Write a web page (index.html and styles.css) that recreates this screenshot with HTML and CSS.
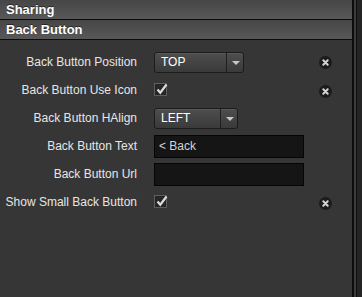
FILE: index.html
```html
<!DOCTYPE html>
<html lang="en">
<head>
    <meta charset="UTF-8">
    <title>Back Button</title>
    <link rel="stylesheet" href="styles.css">
</head>
<body>
    <div class="window">
        <div class="panel">
            <div class="section-header">Sharing</div>
            <div class="section-header">Back Button</div>

            <div class="form">
                <div class="row">
                    <label>Back Button Position</label>
                    <div class="select select-wide">
                        <span class="select-value">TOP</span>
                        <span class="select-arrow"></span>
                    </div>
                    <span class="clear"><svg viewBox="0 0 13 13"><path d="M4.3 4.3l4.4 4.4M8.7 4.3l-4.4 4.4"/></svg></span>
                </div>
                <div class="row">
                    <label>Back Button Use Icon</label>
                    <span class="check"><svg viewBox="0 0 13 13"><path d="M2.5 6.5l2.8 3.2L11.5 1.5"/></svg></span>
                    <span class="clear clear-low"><svg viewBox="0 0 13 13"><path d="M4.3 4.3l4.4 4.4M8.7 4.3l-4.4 4.4"/></svg></span>
                </div>
                <div class="row">
                    <label>Back Button HAlign</label>
                    <div class="select">
                        <span class="select-value">LEFT</span>
                        <span class="select-arrow"></span>
                    </div>
                </div>
                <div class="row">
                    <label>Back Button Text</label>
                    <input type="text" class="field" value="&lt; Back">
                </div>
                <div class="row">
                    <label>Back Button Url</label>
                    <input type="text" class="field" value="">
                </div>
                <div class="row">
                    <label>Show Small Back Button</label>
                    <span class="check"><svg viewBox="0 0 13 13"><path d="M2.5 6.5l2.8 3.2L11.5 1.5"/></svg></span>
                    <span class="clear clear-low"><svg viewBox="0 0 13 13"><path d="M4.3 4.3l4.4 4.4M8.7 4.3l-4.4 4.4"/></svg></span>
                </div>
            </div>
        </div>
        <div class="edge"></div>
    </div>
</body>
</html>
```

FILE: styles.css
```css
:root {
    --bg: #363636;
    --text: #e6e6e6;
    --line: #0c0c0c;
    --field: #151515;
}

html, body {
    height: 100%;
}

body {
    margin: 0;
    background: var(--bg);
    font-family: "Liberation Sans", Arial, sans-serif;
    color: var(--text);
    overflow: hidden;
}

.window {
    display: flex;
    height: 100%;
}

.panel {
    width: 352px;
    flex: none;
    background: var(--bg);
}

.edge {
    flex: 1;
    border-left: 2px solid var(--line);
    box-shadow: inset 2px 0 0 #3c3c3c, inset 3px 0 0 #0e0e0e;
    background: #242424;
}

.section-header {
    height: 19px;
    line-height: 19px;
    padding-left: 6px;
    border-bottom: 1px solid var(--line);
    background: linear-gradient(#464646, #585858);
    font-size: 13px;
    font-weight: 700;
    color: #fff;
    text-shadow: 0 -1px 0 rgba(0, 0, 0, 0.5);
}

.form {
    padding-top: 8px;
}

.row {
    display: grid;
    grid-template-columns: 154px 165px 13px;
    align-items: center;
    height: 28px;
}

.row label {
    padding-right: 17px;
    text-align: right;
    font-size: 12px;
    white-space: nowrap;
}

.select {
    display: flex;
    width: 82px;
    height: 19px;
    border: 1px solid #1c1c1c;
    border-radius: 3px;
    background: linear-gradient(#4e4e4e, #3a3a3a);
    box-shadow: inset 0 1px 0 rgba(255, 255, 255, 0.06);
}

.select-wide {
    width: 88px;
}

.select-value {
    flex: 1;
    padding-left: 6px;
    line-height: 19px;
    font-size: 12px;
    color: #fff;
}

.select-arrow {
    width: 16px;
    border-left: 1px solid #1f1f1f;
    position: relative;
}

.select-arrow::after {
    content: "";
    position: absolute;
    left: 5px;
    top: 8px;
    border-left: 4px solid transparent;
    border-right: 4px solid transparent;
    border-top: 4px solid #c8c8c8;
}

.check {
    position: relative;
    width: 11px;
    height: 11px;
    margin-top: -2px;
    border: 1px solid #5e5e5e;
    background: #262626;
}

.check svg {
    position: absolute;
    left: 0;
    top: -1px;
    width: 13px;
    height: 13px;
    fill: none;
    stroke: #dcdcdc;
    stroke-width: 2.2;
}

.field {
    box-sizing: border-box;
    width: 150px;
    height: 23px;
    margin: 0;
    padding: 0 4px;
    border: 1px solid #050505;
    background: var(--field);
    color: #d4d4d4;
    font-family: "Liberation Sans", Arial, sans-serif;
    font-size: 12px;
    outline: none;
}

.clear {
    grid-column: 3;
    width: 13px;
    height: 13px;
    border-radius: 50%;
    background: #1b1b1b;
}

.clear svg {
    display: block;
    width: 13px;
    height: 13px;
    stroke: #d4d4d4;
    stroke-width: 2;
    stroke-linecap: round;
}

.clear-low {
    margin-top: 2px;
}
```
